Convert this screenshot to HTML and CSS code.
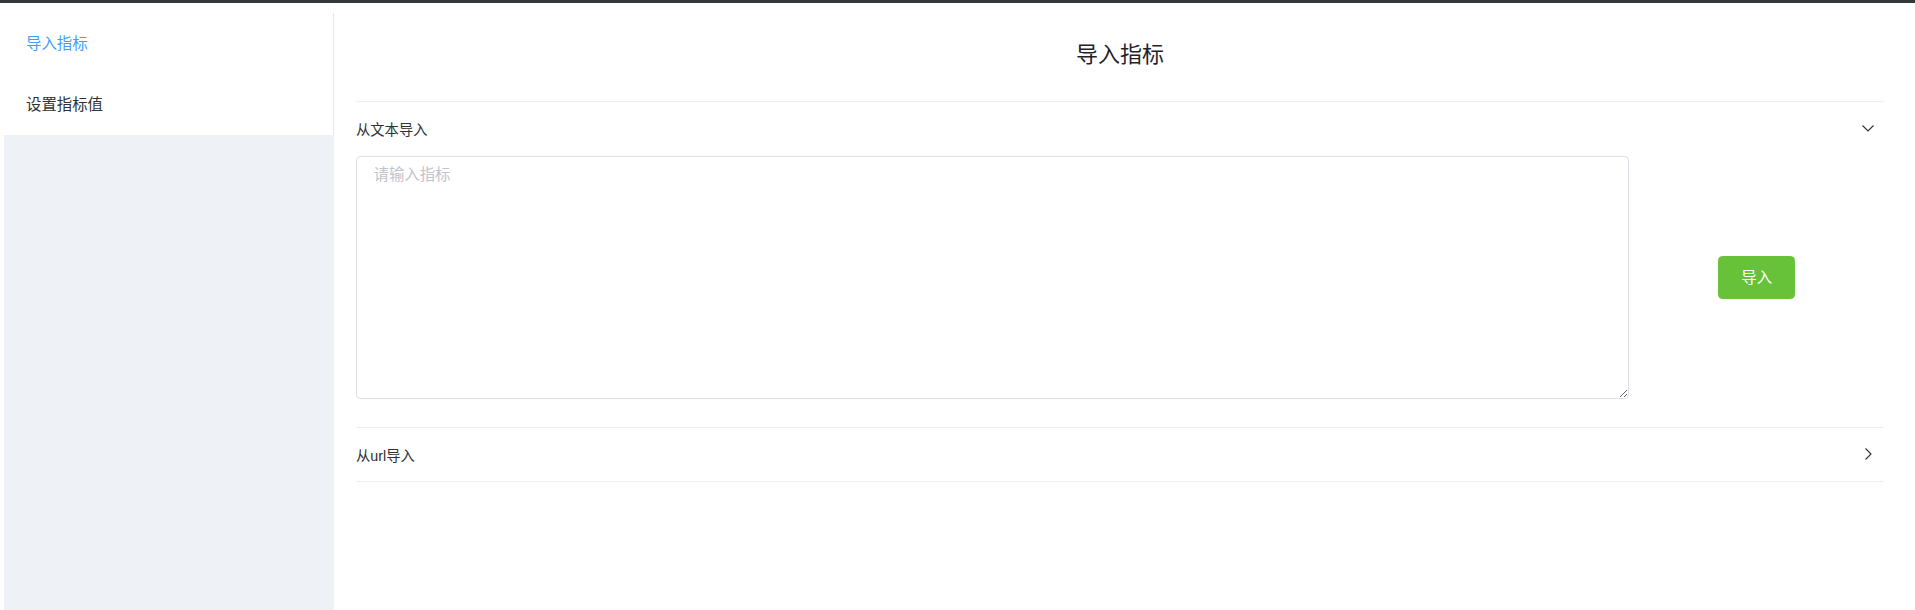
FILE: index.html
```html
<!DOCTYPE html>
<html lang="zh-CN">
<head>
    <meta charset="UTF-8">
    <meta name="viewport" content="width=device-width, initial-scale=1.0">
    <title>导入指标</title>
    <link rel="stylesheet" href="styles.css">
</head>
<body>

<div class="top-bar"></div>

<div class="layout">
    <aside class="aside">
        <ul class="menu">
            <li class="menu-item active">导入指标</li>
            <li class="menu-item">设置指标值</li>
        </ul>
    </aside>

    <main class="main">
        <h2 class="page-title">导入指标</h2>

        <div class="collapse">
            <div class="collapse-item open">
                <div class="collapse-header">
                    <span>从文本导入</span>
                    <svg class="arrow" width="14" height="14" viewBox="0 0 14 14"><polyline points="4.5,1.5 10,7 4.5,12.5" fill="none" stroke="#303133" stroke-width="1.1"/></svg>
                </div>
                <div class="collapse-content">
                    <div class="row">
                        <div class="col-input">
                            <textarea placeholder="请输入指标"></textarea>
                        </div>
                        <div class="col-button">
                            <button class="btn-success">导入</button>
                        </div>
                    </div>
                </div>
            </div>

            <div class="collapse-item">
                <div class="collapse-header">
                    <span>从url导入</span>
                    <svg class="arrow" width="14" height="14" viewBox="0 0 14 14"><polyline points="4.5,1.5 10,7 4.5,12.5" fill="none" stroke="#303133" stroke-width="1.1"/></svg>
                </div>
                <div class="collapse-content">
                    <div class="row">
                        <div class="col-input">
                            <textarea placeholder="请输入url"></textarea>
                        </div>
                        <div class="col-button">
                            <button class="btn-success">导入</button>
                        </div>
                    </div>
                </div>
            </div>
        </div>
    </main>
</div>

<script>
    // abrir / cerrar secciones
    document.querySelectorAll(".collapse-header").forEach(header => {
        header.addEventListener("click", () => {
            header.parentElement.classList.toggle("open");
        });
    });
</script>

</body>
</html>
```

FILE: styles.css
```css
* {
    box-sizing: border-box;
}

body {
    margin: 0;
    font-family: "Liberation Sans", "Noto Sans CJK SC", sans-serif;
    color: #303133;
    background-color: #fff;
}

.top-bar {
    height: 3px;
    background-color: #33373b;
}

.layout {
    display: flex;
    min-height: 607px;
}

.aside {
    width: 330px;
    margin-left: 4px;
    margin-top: 10px;
    background-color: #eef1f6;
}

.menu {
    list-style: none;
    margin: 0;
    padding: 0;
    background-color: #fff;
    border-right: 1px solid #e6e6e6;
}

.menu-item {
    height: 61px;
    line-height: 61px;
    padding-left: 22px;
    font-size: 15.4px;
    color: #303133;
    cursor: pointer;
}

.menu-item.active {
    color: #409eff;
}

.main {
    flex: 1;
    padding: 0 31px 0 22px;
}

.page-title {
    margin: 0;
    height: 98px;
    display: flex;
    align-items: center;
    justify-content: center;
    font-size: 22px;
    font-weight: normal;
    color: #1f2329;
}

.collapse {
    border-top: 1px solid #ebeef5;
    border-bottom: 1px solid #ebeef5;
}

.collapse-header {
    height: 53px;
    display: flex;
    align-items: center;
    justify-content: space-between;
    font-size: 14.3px;
    border-bottom: 1px solid #ebeef5;
    cursor: pointer;
}

.collapse-item:last-child .collapse-header {
    border-bottom: none;
}

.collapse-item.open .collapse-header {
    border-bottom-color: transparent;
}

.arrow {
    margin-right: 9px;
}

.collapse-item.open .arrow {
    transform: rotate(90deg);
}

.collapse-content {
    display: none;
    padding-top: 1px;
    padding-bottom: 27.5px;
    border-bottom: 1px solid #ebeef5;
}

.collapse-item.open .collapse-content {
    display: block;
}

.row {
    display: flex;
}

.col-input {
    width: 83.3333%;
}

.col-button {
    width: 16.6667%;
    display: flex;
    align-items: center;
    justify-content: center;
}

textarea {
    display: block;
    width: 100%;
    height: 243px;
    padding: 5.5px 16.5px;
    font-family: "Liberation Sans", "Noto Sans CJK SC", sans-serif;
    font-size: 15.4px;
    line-height: 1.5;
    color: #606266;
    border: 1px solid #dcdfe6;
    border-radius: 4.4px;
    outline: none;
}

textarea::placeholder {
    color: #c0c4cc;
}

.btn-success {
    padding: 13.2px 22px;
    font-family: "Liberation Sans", "Noto Sans CJK SC", sans-serif;
    font-size: 15.4px;
    line-height: 1;
    color: #fff;
    background-color: #67c23a;
    border: 1px solid #67c23a;
    border-radius: 4.4px;
    cursor: pointer;
}

.btn-success:hover {
    background-color: #85ce61;
}
```
